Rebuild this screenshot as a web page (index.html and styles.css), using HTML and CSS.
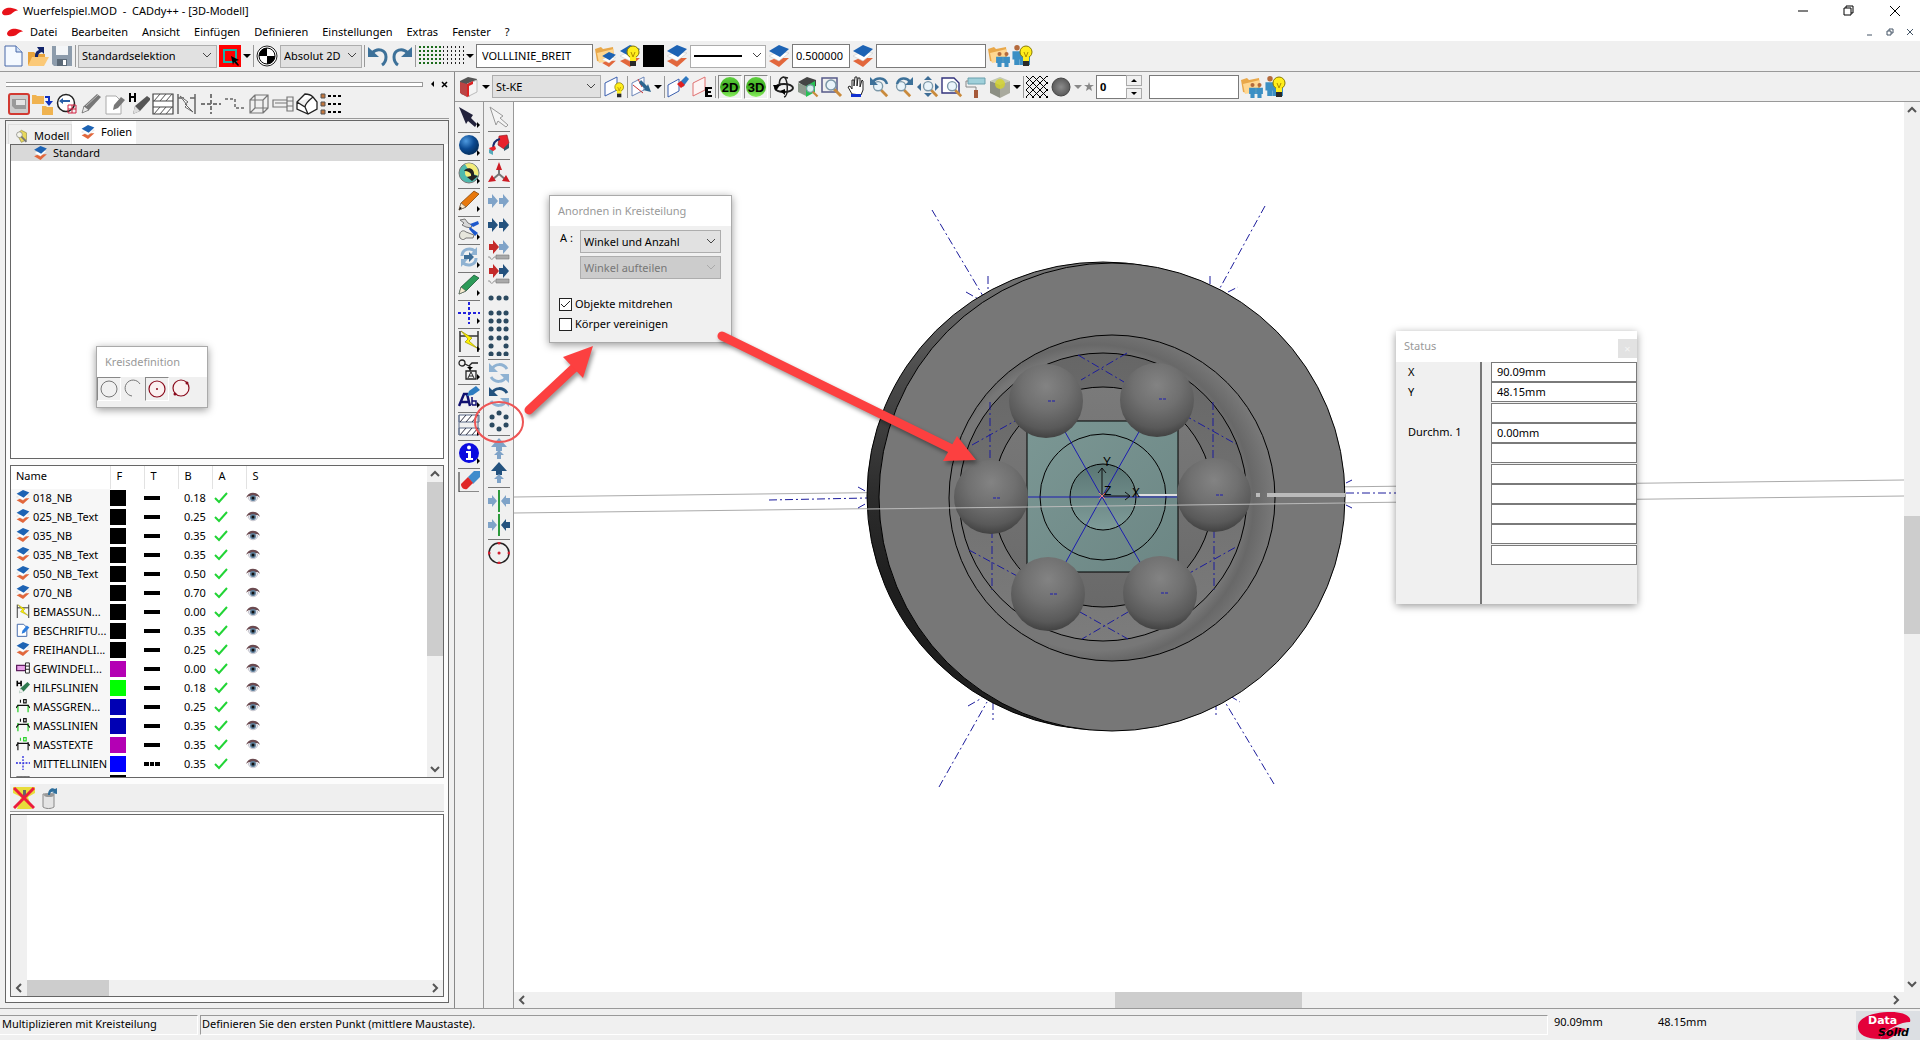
FILE: index.html
```html
<!DOCTYPE html>
<html lang="de">
<head>
<meta charset="utf-8">
<title>Wuerfelspiel.MOD - CADdy++ - [3D-Modell]</title>
<link rel="stylesheet" href="styles.css">
</head>
<body>
<svg class="defs" aria-hidden="true">
<defs>
<linearGradient id="gBody" x1="0" y1="0" x2="0" y2="1"><stop offset="0" stop-color="#777"/><stop offset=".25" stop-color="#4a4a4a"/><stop offset=".5" stop-color="#2c2c2c"/><stop offset=".7" stop-color="#1e1e1e"/></linearGradient>
<radialGradient id="gRing" gradientUnits="userSpaceOnUse" cx="1095" cy="503" r="182"><stop offset="0" stop-color="#777"/><stop offset=".81" stop-color="#777"/><stop offset=".87" stop-color="#686868"/><stop offset="1" stop-color="#7b7b7b"/></radialGradient>
<linearGradient id="gFloor" x1="0" y1="0" x2="0" y2="1"><stop offset="0" stop-color="#666"/><stop offset="1" stop-color="#7c7c7c"/></linearGradient>
<linearGradient id="gCup" x1="0" y1="0" x2="0" y2="1"><stop offset="0" stop-color="#7a7a7a"/><stop offset="1" stop-color="#696969"/></linearGradient>
<linearGradient id="gCube" x1="0" y1="0" x2="1" y2="1"><stop offset="0" stop-color="#7b9794"/><stop offset="1" stop-color="#6c8684"/></linearGradient>
<linearGradient id="gDimple" x1="0" y1="0" x2="0" y2="1"><stop offset="0" stop-color="#5a7674"/><stop offset="1" stop-color="#7f9c99"/></linearGradient>
<radialGradient id="gBall" cx=".5" cy=".3" r=".72"><stop offset="0" stop-color="#838383"/><stop offset=".45" stop-color="#707070"/><stop offset=".8" stop-color="#595959"/><stop offset="1" stop-color="#3e3e3e"/></radialGradient>
<radialGradient id="gBlue" cx=".35" cy=".3" r=".8"><stop offset="0" stop-color="#4f9be0"/><stop offset=".5" stop-color="#0b4a92"/><stop offset="1" stop-color="#04284f"/></radialGradient>
<radialGradient id="gGrey" cx=".5" cy=".5" r=".5"><stop offset="0" stop-color="#8c8c8c"/><stop offset="1" stop-color="#5a5a5a"/></radialGradient>
<linearGradient id="gGreen" x1="0" y1="0" x2="0" y2="1"><stop offset="0" stop-color="#5fd040"/><stop offset=".5" stop-color="#3fae20"/><stop offset="1" stop-color="#8bf060"/></linearGradient>
<pattern id="pHatch" width="7" height="7" patternUnits="userSpaceOnUse"><path d="M0 7L7 0M0 0L7 7" stroke="#000" stroke-width="1"/></pattern>
<pattern id="pDotG" width="4" height="4" patternUnits="userSpaceOnUse"><rect width="2" height="2" x="1" y="1" fill="#1b6b1b"/></pattern>
<pattern id="pDotK" width="4" height="4" patternUnits="userSpaceOnUse"><rect width="1" height="2" x="1" y="1" fill="#222"/></pattern>

<symbol id="swoosh" viewBox="0 0 18 10"><path d="M0 6C1 2 6 0 11 1c3 1 6 1 7 3-3 0-5 2-8 4-4 2-10 2-10-2z" fill="#e8121a"/></symbol>
<symbol id="new" viewBox="0 0 22 22"><path d="M2 1h11l6 6v14H2z" fill="#f4f9ff" stroke="#4868a8"/><path d="M13 1v6h6" fill="#cfe0f6" stroke="#4868a8"/></symbol>
<symbol id="open" viewBox="0 0 22 22"><path d="M1 20V7h6l2 2h9v4" fill="#e8a33c"/><path d="M1 21l4-9h17l-5 9z" fill="#fbc978"/><path d="M8 12c0-4 1-6 4-7l-2-3h7v7l-2-2c-3 1-4 2-4 5z" fill="#12246b"/></symbol>
<symbol id="save" viewBox="0 0 22 22"><path d="M1 1h20v20H3l-2-2z" fill="#8d9cac"/><path d="M5 1h12v9H5z" fill="#f4f6f8"/><path d="M6 14h10v7H6z" fill="#5c6a78"/><path d="M12 15h3v5h-3z" fill="#fff"/></symbol>
<symbol id="selred" viewBox="0 0 22 22"><path d="M0 0h22v22H0z" fill="#f00"/><path d="M5 5h12v12H5z" fill="none" stroke="#19b5a8" stroke-width="2"/><path d="M12 11l8 4-3 1 3 4-1 1-4-4-1 3z" fill="#000"/></symbol>
<symbol id="bw" viewBox="0 0 22 22"><circle cx="11" cy="11" r="10" fill="#fff" stroke="#222"/><circle cx="11" cy="11" r="8" fill="#fff" stroke="#000"/><path d="M11 11V3a8 8 0 0 0-8 8zM11 11v8a8 8 0 0 0 8-8z"/></symbol>
<symbol id="undo" viewBox="0 0 22 22"><path d="M5 8c6-6 14-3 14 4 0 3-1 6-4 8" fill="none" stroke="#3d7199" stroke-width="3"/><path d="M1 2v10h11z" fill="#3d7199"/></symbol>
<symbol id="redo" viewBox="0 0 22 22"><path d="M17 8C11 2 3 5 3 12c0 3 1 6 4 8" fill="none" stroke="#3d7199" stroke-width="3"/><path d="M21 2v10H10z" fill="#3d7199"/></symbol>
<symbol id="dotgrid" viewBox="0 0 46 22"><path d="M0 1h24v20H0z" fill="url(#pDotG)"/><path d="M24 1h22v20H24z" fill="url(#pDotK)"/></symbol>
<symbol id="layers" viewBox="0 0 22 22"><path d="M1 16l7-3 13 0-10 9z" fill="#e2673c"/><path d="M1 11l8-4 12 1-10 8z" fill="#fff" stroke="#ccc" stroke-width=".6"/><path d="M1 6l10-6 10 4-9 8z" fill="#1d63b4"/></symbol>
<symbol id="bulb" viewBox="0 0 22 22"><circle cx="14" cy="7" r="6" fill="#ffee1c" stroke="#8a7a00"/><path d="M11 12h6v4h-6z" fill="#ffee1c"/><path d="M12 7l2 5 2-5" fill="none" stroke="#b08c00"/><path d="M11 16h6v5h-6z" fill="#2a2a2a"/></symbol>
<symbol id="folder" viewBox="0 0 22 22"><path d="M0 4l6-2 2 2 10-2 1 11-13 4-4-1z" fill="#e9a84a"/><path d="M2 8l17-4-3 12-12 2z" fill="#ffd792"/></symbol>
<symbol id="folderlayers" viewBox="0 0 22 22"><use href="#folder"/><svg x="6" y="7" width="16" height="15"><use href="#layers"/></svg></symbol>
<symbol id="layersbulb" viewBox="0 0 22 22"><use href="#layers"/><use href="#bulb"/></symbol>
<symbol id="man" viewBox="0 0 10 22"><circle cx="5" cy="3" r="3" fill="#b46a3c"/><path d="M0 7h10v9H8v6H2v-6H0z" fill="#3b8fc4"/></symbol>
<symbol id="foldermen" viewBox="0 0 22 22"><use href="#folder"/><svg x="8" y="7" width="7" height="15"><use href="#man"/></svg><svg x="15" y="7" width="7" height="15"><use href="#man"/></svg></symbol>
<symbol id="menbulb" viewBox="0 0 22 22"><svg x="0" y="0" width="10" height="20"><use href="#man"/></svg><path d="M8 8l10 0v12H8z" fill="#3b8fc4"/><use href="#bulb"/></symbol>
<symbol id="book" viewBox="0 0 22 22"><path d="M2 5l8-4 9 2v3l-8 15-8-3z" fill="#555"/><path d="M9 8l10-4v12L9 21z" fill="#f4f4f4" stroke="#bbb"/><path d="M2 6l7 2v13l-7-4z" fill="#b44"/><path d="M9 8l6-3v3l-4 2v10l-2 1z" fill="#d22"/></symbol>
<symbol id="plane" viewBox="0 0 22 22"><path d="M2 7l12-6v13L2 20z" fill="#fdfdff" stroke="#3a5fae"/></symbol>
<symbol id="planebulb" viewBox="0 0 22 22"><use href="#plane"/><svg x="6" y="6" width="16" height="16"><use href="#bulb"/></svg></symbol>
<symbol id="planearr" viewBox="0 0 22 22"><path d="M2 7l12-6v13L2 20z" fill="#fdfdff" stroke="#6c86b8"/><path d="M8 3l4 8M3 9l10 8" stroke="#c33"/><path d="M11 4l6 6 1-2 3 8-8-2 2-1-6-6z" fill="#2c6690"/></symbol>
<symbol id="planeerase" viewBox="0 0 22 22"><path d="M1 9l11-6v12L1 21z" fill="#fdfdff" stroke="#3a5fae"/><path d="M12 7l7-7 3 3-6 8z" fill="#2f78c0"/><path d="M14 5l4 4-4 3-4-4z" fill="#e02020"/></symbol>
<symbol id="planeE" viewBox="0 0 22 22"><path d="M2 7l12-6v13L2 20z" fill="#fdf4f4" stroke="#e07070"/><path d="M14 11h7v2h-4v2h3v2h-3v2h4v2h-7z"/></symbol>
<symbol id="ball2d" viewBox="0 0 22 22"><circle cx="11" cy="11" r="10" fill="url(#gGreen)"/><text x="11" y="16" text-anchor="middle" class="ball-text">2D</text></symbol>
<symbol id="ball3d" viewBox="0 0 22 22"><circle cx="11" cy="11" r="10" fill="url(#gGreen)"/><text x="11" y="16" text-anchor="middle" class="ball-text">3D</text></symbol>
<symbol id="orbit" viewBox="0 0 22 22"><ellipse cx="11" cy="12" rx="9" ry="4" fill="none" stroke="#222" stroke-width="2"/><path d="M10 1c5 0 6 19 1 20M10 1l5 1M10 1c-4 2-4 6-3 9" fill="none" stroke="#222" stroke-width="1.5"/><path d="M0 9h7l-4 6zM7 15l5-2v6z"/></symbol>
<symbol id="glass" viewBox="0 0 22 22"><path d="M13 13l7 7" stroke="#c98a3c" stroke-width="3"/><circle cx="10" cy="9" r="5" fill="#e8f4fb" fill-opacity=".9" stroke="#7b97a8" stroke-width="1.5"/></symbol>
<symbol id="house" viewBox="0 0 22 22"><path d="M1 6l9-5 9 3v6l-9 2z" fill="#444"/><path d="M1 7l8 3v10l-8-4z" fill="#8d9a8d"/><path d="M9 10l9-5v11l-9 5z" fill="#27c154"/><svg x="6" y="6" width="16" height="16"><use href="#glass"/></svg></symbol>
<symbol id="zoomwin" viewBox="0 0 22 22"><path d="M1 2h15v14H1z" fill="none" stroke="#555a88" stroke-width="1.5"/><use href="#glass"/></symbol>
<symbol id="hand" viewBox="0 0 22 22"><path d="M7 18L3 11l2-1 2 3V4h2v6l1-9h2v9l1-8h2v9l2-7 1 1v9l-2 5z" fill="#fff" stroke="#222"/><path d="M6 18h10v3H6z" fill="#1030d0"/></symbol>
<symbol id="zoomback" viewBox="0 0 22 22"><svg x="0" y="2" width="20" height="20"><use href="#glass"/></svg><path d="M4 6c3-5 12-5 14 2" fill="none" stroke="#3d7199" stroke-width="2.5"/><path d="M1 1v8h8z" fill="#3d7199"/></symbol>
<symbol id="zoomfwd" viewBox="0 0 22 22"><svg x="-1" y="2" width="20" height="20"><use href="#glass"/></svg><path d="M4 8C6 1 14 1 17 6" fill="none" stroke="#3d7199" stroke-width="2.5"/><path d="M20 1v8h-8z" fill="#3d7199"/></symbol>
<symbol id="zoomall" viewBox="0 0 22 22"><path d="M11 0l4 4H7zM11 21l4-4H7zM0 11l4-4v8zM22 11l-4-4v8z" fill="#3d6d96"/><svg x="2" y="2" width="20" height="20"><use href="#glass"/></svg></symbol>
<symbol id="zoompage" viewBox="0 0 22 22"><path d="M1 2h12l5 5v10H1z" fill="#fff" stroke="#33337c" stroke-width="1.4"/><svg x="2" y="2" width="20" height="20"><use href="#glass"/></svg></symbol>
<symbol id="roller" viewBox="0 0 22 22"><path d="M3 2h17v6H3z" fill="#9fd0da" stroke="#6b9fac"/><path d="M3 5H1v6h10v4" fill="none" stroke="#888"/><path d="M9 14h4v8H9z" fill="#a65a3a"/></symbol>
<symbol id="cubey" viewBox="0 0 22 22"><path d="M1 5l10 3v14L1 17z" fill="#8c8f84"/><path d="M21 5l-10 3v14l10-5z" fill="#a9aa9e"/><path d="M1 5l10-4 10 4-10 4z" fill="#c4c8b4"/><circle cx="11" cy="8" r="5" fill="#d6d429" fill-opacity=".8"/></symbol>
<symbol id="xhatch" viewBox="0 0 22 22"><path d="M0 0h22v22H0z" fill="url(#pHatch)"/></symbol>
<symbol id="greyball" viewBox="0 0 22 22"><circle cx="11" cy="11" r="9" fill="url(#gGrey)" stroke="#444"/></symbol>
<symbol id="star" viewBox="0 0 10 22"><path d="M5 6l1 3h4L7 11l1 4-3-2-3 2 1-4-3-2h4z" fill="#888"/></symbol>

<symbol id="redsave" viewBox="0 0 22 22"><rect x="1" y="1" width="20" height="20" rx="2" fill="#ccc" stroke="#d23a32" stroke-width="2"/><path d="M4 6h14v10H7l-3-3z" fill="#999"/><path d="M8 7h9v5H8z" fill="#e4e4e4"/></symbol>
<symbol id="folders" viewBox="0 0 22 22"><path d="M0 2h4l1 1h7v8H0z" fill="#f0b350"/><path d="M10 13h4l1 1h6v8H10z" fill="#f0b350"/><path d="M13 4h4v6" fill="none" stroke="#1030c0" stroke-width="2"/><path d="M13 8h8l-4 5z" fill="#1030c0"/></symbol>
<symbol id="circsel" viewBox="0 0 22 22"><circle cx="10" cy="10" r="8.500" fill="#fff" stroke="#222" stroke-width="1.500"/><path d="M3 8l4-3v2h7v2H7v2z" fill="#2a5fa8"/><path d="M12 12h8v8h-8zM16 12v8M12 16h8" fill="none" stroke="#d02040"/></symbol>
<symbol id="pencilg" viewBox="0 0 22 22"><path d="M2 20l2-7L17 1l4 3L9 17z" fill="#777"/><path d="M2 20l2-7 5 4z" fill="#e8e8e8" stroke="#555" stroke-width=".6"/><path d="M6 13L18 2" stroke="#bbb"/></symbol>
<symbol id="pageedit" viewBox="0 0 22 22"><path d="M2 3h10l5 5v13H2z" fill="#fff" stroke="#aaa"/><path d="M9 17l1-5 7-8 4 3-7 8z" fill="#777"/></symbol>
<symbol id="hpencil" viewBox="0 0 22 22"><path d="M5 21l2-8L19 3l4 3-11 12z" fill="#555"/><path d="M5 21l2-8 5 5z" fill="#ddd"/><path d="M2 0v9M7 0v9M2 4h5" stroke="#000" stroke-width="2"/></symbol>
<symbol id="hatchbox" viewBox="0 0 22 22"><path d="M1 1h20v20H1zM1 8h20M1 14h20" fill="#fff" stroke="#444" stroke-width="1.200"/><path d="M2 8l6-7M8 8l6-7M14 8l6-7M2 21l6-7M8 21l6-7M14 21l6-7" stroke="#555"/></symbol>
<symbol id="dimg" viewBox="0 0 22 22"><path d="M2 1v20M19 1v20M2 5h6M14 5h5" stroke="#666" stroke-width="1.500"/><path d="M4 3l8 6-3 2 8 8-8-5 2-2z" fill="#fff" stroke="#666"/></symbol>
<symbol id="crossg" viewBox="0 0 22 22"><path d="M11 1v20M1 11h20" stroke="#777" stroke-width="2" stroke-dasharray="4 2"/></symbol>
<symbol id="stepg" viewBox="0 0 22 22"><path d="M1 6h10v9h11" fill="none" stroke="#888" stroke-width="2" stroke-dasharray="3 2"/></symbol>
<symbol id="wirecube" viewBox="0 0 22 22"><path d="M2 7h13v13H2zM7 2h13v13H7zM2 7l5-5M15 7l5-5M15 20l5-5M2 20l5-5" fill="none" stroke="#777" stroke-width="1.200"/></symbol>
<symbol id="boltg" viewBox="0 0 22 22"><path d="M1 7h14v7H1zM15 4h6v14h-6zM15 8h6M15 13h6M3 10h12" fill="none" stroke="#777" stroke-width="1.200"/></symbol>
<symbol id="roundcube" viewBox="0 0 22 22"><path d="M1 9l8-8c5 0 7 2 8 3l4 5v7l-9 5L1 16zM1 9l8 5c0-3 3-6 8-10M9 14l3 7" fill="#fff" stroke="#222" stroke-width="1.300"/></symbol>
<symbol id="listdots" viewBox="0 0 22 22"><path d="M1 1h4v4H1zM1 9h4v4H1zM1 17h4v4H1z" fill="#c4763c" stroke="#555"/><path d="M8 3h14M8 11h14M8 19h14" stroke="#000" stroke-width="2" stroke-dasharray="3 2"/></symbol>
<symbol id="modell" viewBox="0 0 22 22"><path d="M3 8l7-6 8 4v11l-8 4z" fill="#e8d85a" stroke="#8a8440"/><circle cx="7" cy="9" r="4.500" fill="#f4f4ea" stroke="#777"/><path d="M10 12l8 8" stroke="#777" stroke-width="3"/></symbol>

<symbol id="arrowd" viewBox="0 0 22 22"><path d="M1 1l14 8-2 3 6 6-2 3-7-6-2 3z" fill="#23233c"/></symbol>
<symbol id="arroww" viewBox="0 0 22 22"><path d="M2 1l13 9-3 2 8 7-2 2-8-6-2 4z" fill="#f4f4f4" stroke="#999"/></symbol>
<symbol id="sphere" viewBox="0 0 22 22"><circle cx="11" cy="11" r="10" fill="url(#gBlue)"/></symbol>
<symbol id="swirl" viewBox="0 0 22 22"><circle cx="11" cy="11" r="10" fill="#4fb9ad" stroke="#777"/><path d="M7 2c9-3 15 5 13 12-3-2-8-2-13-12z" fill="#f3ec7a"/><circle cx="11" cy="11" r="4" fill="#f3ec7a"/><path d="M6 9c3-5 11-3 10 4l4 1-6 5-5-4 4-1c1-3-3-5-7-5z" fill="#222"/></symbol>
<symbol id="pencilo" viewBox="0 0 22 22"><path d="M1 20l2-7L16 1l5 3L8 17z" fill="#e8780c" stroke="#7a3c00" stroke-width=".7"/><path d="M1 20l2-7 5 4z" fill="#fbe6c8" stroke="#555" stroke-width=".6"/><path d="M1 20l1-3 2 1z"/></symbol>
<symbol id="pliers" viewBox="0 0 22 22"><path d="M2 2l5-1 3 4 4 2-1 3-5-1-4-2 2-2z" fill="#d7d7d7" stroke="#777"/><path d="M12 6l8-3 1 3-6 3zM12 9l8 6-3 3-6-7z" fill="#1d58cc"/><path d="M2 20c-2-6 3-9 6-6l8 3-1 3-7 0-3 2z" fill="#e6e6dc" stroke="#777"/></symbol>
<symbol id="turn" viewBox="0 0 22 22"><path d="M4 10C4 3 12 1 17 5M18 12c0 7-8 9-13 5" fill="none" stroke="#8fb2d2" stroke-width="3"/><path d="M19 1v8h-7zM3 21v-8h7z" fill="#8fb2d2"/><path d="M6 9h5V6l5 5-5 5v-3H6z" fill="#3d6d96"/></symbol>
<symbol id="pencilgr" viewBox="0 0 22 22"><path d="M1 20l2-7L16 1l5 3L8 17z" fill="#2c9a58" stroke="#0f4a28" stroke-width=".7"/><path d="M1 20l2-7 5 4z" fill="#f6ecd0" stroke="#555" stroke-width=".6"/></symbol>
<symbol id="crossb" viewBox="0 0 22 22"><path d="M11 0v22M0 11h22" stroke="#2222dd" stroke-width="2" stroke-dasharray="3 2"/></symbol>
<symbol id="dimy" viewBox="0 0 22 22"><path d="M2 1v21M20 1v21M2 6h18" stroke="#333" stroke-width="1.500"/><path d="M3 1l11 7-3 3 8 7-12-6 3-3z" fill="#fff200" stroke="#9a9000" stroke-width=".7"/></symbol>
<symbol id="weld" viewBox="0 0 22 22"><circle cx="4" cy="5" r="3" fill="none" stroke="#222" stroke-width="1.300"/><path d="M7 6l4 2 3-3h6M12 8v5M8 13h10v8H8z" fill="none" stroke="#222" stroke-width="1.300"/><path d="M9 9h6l-3 3z"/><path d="M10 20l3-6 3 6M11 18h4" fill="none" stroke="#222"/></symbol>
<symbol id="abc" viewBox="0 0 22 22"><path d="M1 20L6 8h3l3 12M3 16h7" fill="none" stroke="#101070" stroke-width="2.500"/><path d="M14 11v8M14 15h4v4h-4" fill="none" stroke="#101070" stroke-width="1.500"/><path d="M9 10l2-5 7-5 4 4-7 5z" fill="#2d7cc0"/></symbol>
<symbol id="hatchb" viewBox="0 0 22 22"><path d="M1 1v20M20 1v20M1 1h20v7H1zM1 14h20v7H1z" fill="#fff" stroke="#5b6b88"/><path d="M2 8l6-7M8 8l6-7M14 8l6-7M2 21l6-7M8 21l6-7M14 21l6-7" stroke="#334"/></symbol>
<symbol id="info" viewBox="0 0 22 22"><circle cx="11" cy="11" r="10" fill="#0a0ae0"/><circle cx="11" cy="5.500" r="2" fill="#fff"/><path d="M8 9h5v7h2v2H8v-2h2v-5H8z" fill="#fff"/></symbol>
<symbol id="eraser" viewBox="0 0 22 22"><path d="M1 2v20h20" fill="none" stroke="#222"/><path d="M10 7l6-6h6v6l-7 7z" fill="#3f8ccc"/><path d="M3 14l7-7 5 6-6 6c-4 1-6-2-6-5z" fill="#e02828"/></symbol>
<symbol id="move3d" viewBox="0 0 22 22"><path d="M11 2l8-1 2 8-5 6-6-4z" fill="#e8222c" stroke="#8a1018" stroke-width=".6"/><path d="M21 9v5l-5 3v-3z" fill="#356"/><path d="M5 15c0-6 2-9 7-10" fill="none" stroke="#1b2a6b" stroke-width="2"/><path d="M1 14l6-2 1 3-4 3z" fill="#e8222c"/><path d="M1 15l4 2v4l-4-2z" fill="#5ab"/></symbol>
<symbol id="axes" viewBox="0 0 22 22"><path d="M11 12V4M11 12l-7 6M11 12l7 6" stroke="#777" stroke-width="2"/><path d="M11 0l3 8H8zM0 20l4-7 4 6zM22 20l-4-7-4 6z" fill="#cc1c24"/></symbol>
<symbol id="ar" viewBox="0 0 10 14"><path d="M0 4h4V0l6 7-6 7v-4H0z" fill="currentColor"/></symbol>
<symbol id="arr2l" viewBox="0 0 22 22"><g color="#7fa3c8"><use href="#ar" x="0" y="4" width="10" height="14"/><use href="#ar" x="11" y="4" width="10" height="14"/></g></symbol>
<symbol id="arr2d" viewBox="0 0 22 22"><g color="#24527e"><use href="#ar" x="0" y="4" width="10" height="14"/><use href="#ar" x="11" y="4" width="10" height="14"/></g></symbol>
<symbol id="spring" viewBox="0 0 22 6"><path d="M0 3h2c0 3 3 3 4 0h2" fill="none" stroke="#999"/><path d="M8 1h13v4H8z" fill="#aaa" stroke="#777" stroke-width=".6"/></symbol>
<symbol id="arr3l" viewBox="0 0 22 22"><use href="#ar" x="1" y="2" width="10" height="14" color="#c42a2a"/><use href="#ar" x="11" y="2" width="10" height="14" color="#7fa3c8"/><use href="#spring" x="0" y="16" width="22" height="6"/></symbol>
<symbol id="arr3d" viewBox="0 0 22 22"><use href="#ar" x="1" y="2" width="10" height="14" color="#c42a2a"/><use href="#ar" x="11" y="2" width="10" height="14" color="#24527e"/><use href="#spring" x="0" y="16" width="22" height="6"/></symbol>
<symbol id="dots1" viewBox="0 0 22 22"><path d="M3 12h.1M11 12h.1M18 12h.1" class="dot"/></symbol>
<symbol id="dots9" viewBox="0 0 22 22"><path d="M3 3h.1M11 3h.1M18 3h.1M3 11h.1M11 11h.1M18 11h.1M3 19h.1M11 19h.1M18 19h.1" class="dot"/></symbol>
<symbol id="dots8" viewBox="0 0 22 22"><path d="M3 4h.1M11 4h.1M18 4h.1M3 12h.1M18 12h.1M3 20h.1M11 20h.1M18 20h.1" class="dot"/></symbol>
<symbol id="rotl" viewBox="0 0 22 22"><path d="M3 8c4-7 12-7 16-1M19 14c-4 7-12 7-16 1" fill="none" stroke="#8fb2d2" stroke-width="3"/><path d="M1 1v9h9zM21 21v-9h-9z" fill="#8fb2d2"/></symbol>
<symbol id="rotd" viewBox="0 0 22 22"><path d="M3 8c4-7 12-7 16-1" fill="none" stroke="#24527e" stroke-width="3"/><path d="M19 14c-4 7-12 7-16 1" fill="none" stroke="#8fb2d2" stroke-width="3"/><path d="M1 1v9h9z" fill="#24527e"/><path d="M21 21v-9h-9z" fill="#8fb2d2"/></symbol>
<symbol id="dots6" viewBox="0 0 22 22"><path d="M11 3h.1M4 7h.1M18 7h.1M4 15h.1M18 15h.1M11 19h.1" class="dot"/></symbol>
<symbol id="upl" viewBox="0 0 22 22"><path d="M11 0l8 9h-5v4H8V9H3z" fill="#7fa3c8"/><path d="M11 12l5 5h-3v4H9v-4H6z" fill="#7fa3c8"/></symbol>
<symbol id="upd" viewBox="0 0 22 22"><path d="M11 0l8 9h-5v4H8V9H3z" fill="#24527e"/><path d="M11 12l5 5h-3v4H9v-4H6z" fill="#7fa3c8"/></symbol>
<symbol id="mirl" viewBox="0 0 22 22"><path d="M11 0v22" stroke="#2c9a3c" stroke-width="2"/><path d="M0 8h4V5l5 6-5 6v-3H0zM22 8h-4V5l-5 6 5 6v-3h4z" fill="#7fa3c8"/></symbol>
<symbol id="mird" viewBox="0 0 22 22"><path d="M11 0v22" stroke="#2c9a3c" stroke-width="2"/><path d="M0 8h4V5l5 6-5 6v-3H0z" fill="#7fa3c8"/><path d="M22 8h-4V5l-5 6 5 6v-3h4z" fill="#24527e"/></symbol>
<symbol id="circ4" viewBox="0 0 22 22"><circle cx="11" cy="11" r="10" fill="none" stroke="#222" stroke-width="1.500"/><path d="M11 1h.1M11 21h.1M1 11h.1M21 11h.1M11 11h.1" stroke="#d02030" stroke-width="3" stroke-linecap="round"/></symbol>

<symbol id="check" viewBox="0 0 14 14"><path d="M1 7l4 4L13 2" fill="none" stroke="#22d436" stroke-width="2"/></symbol>
<symbol id="eye" viewBox="0 0 14 12"><path d="M0 6c2-7 12-7 14 0-1-1-2-2-3-2H4C2 4 1 5 0 6z" fill="#6b4a50"/><path d="M2 6c2-3 8-3 10 0-2 5-8 5-10 0z" fill="#e4e6ee" stroke="#9a98a4" stroke-width=".5"/><circle cx="7" cy="6" r="3" fill="#5b7c98"/><circle cx="7" cy="6" r="1.500" fill="#111"/></symbol>
<symbol id="gew" viewBox="0 0 22 22"><path d="M1 7h14v8H1z" fill="#e8a0e8" stroke="#602060" stroke-width="2"/><path d="M15 3h6v16h-6zM15 8h6M15 13h6" fill="#fff" stroke="#222" stroke-width="1.500"/></symbol>
<symbol id="hgreen" viewBox="0 0 22 22"><path d="M5 21l2-8L18 3l4 4-10 11z" fill="#2f7a50"/><path d="M5 21l2-8 5 5z" fill="#eee"/><path d="M2 1v9M8 1v9M2 5h6" stroke="#000" stroke-width="2.500"/></symbol>
<symbol id="massg" viewBox="0 0 22 22"><path d="M3 9v12M19 9v12" stroke="#2bd02b" stroke-width="2"/><path d="M0 14l3-4h16l3 4M7 1v5M12 1h4v5h-4z" fill="none" stroke="#111" stroke-width="1.800"/></symbol>
<symbol id="massl" viewBox="0 0 22 22"><path d="M3 8v13M19 8v13" stroke="#2bd02b" stroke-width="2"/><path d="M0 15l4-5h14l4 5M7 1v5M12 1h4v5h-4z" fill="none" stroke="#111" stroke-width="1.800"/></symbol>
<symbol id="masst" viewBox="0 0 22 22"><path d="M3 8v13M19 8v13M0 14l3-4h16l3 4" fill="none" stroke="#111" stroke-width="1.800"/><path d="M7 1v5M12 1h4v5h-4z" fill="none" stroke="#2bd02b" stroke-width="1.800"/></symbol>
<symbol id="pageblue" viewBox="0 0 22 22"><path d="M2 2h10l5 5v14H2z" fill="#fff" stroke="#3f66a8" stroke-width="1.500"/><path d="M9 17l1-5 7-8 4 3-7 8z" fill="#2d7cdc"/></symbol>
<symbol id="brushx" viewBox="0 0 22 22"><path d="M0 0h22v6l-7 4 4 12H4l4-12-8-4z" fill="#e8dc3a"/><path d="M10 3h3v9h-3z" fill="#666"/><path d="M1 1l20 20M21 1L1 21" stroke="#ec1c3c" stroke-width="3"/></symbol>
<symbol id="bin" viewBox="0 0 22 22"><path d="M2 7h11v13c-3 2-8 2-11 0z" fill="#e4e4e4" stroke="#888"/><ellipse cx="8" cy="8" rx="5" ry="2" fill="#999"/><path d="M7 8c0-6 4-8 7-6l2-1v6l-5-1 2-1c-3-1-4 1-4 3z" fill="#2f6f9c"/></symbol>
<symbol id="circle" viewBox="0 0 22 22"><circle cx="11" cy="11" r="8" fill="none" stroke="#777"/></symbol>
<symbol id="arc" viewBox="0 0 22 22"><path d="M10 18a8 8 0 1 1 8-12" fill="none" stroke="#777"/></symbol>
<symbol id="circlec" viewBox="0 0 22 22"><circle cx="11" cy="11" r="8" fill="#fbf0f0" stroke="#8a0a1c" stroke-width="1.200"/><circle cx="11" cy="11" r="1" fill="#8a0a1c"/></symbol>
<symbol id="circle2" viewBox="0 0 22 22"><circle cx="11" cy="10" r="8" fill="#fbf0f0" stroke="#8a0a1c" stroke-width="1.200"/><circle cx="5" cy="16" r="1.500" fill="#8a0a1c"/><circle cx="17" cy="5" r="1.500" fill="#8a0a1c"/></symbol>
<symbol id="down" viewBox="0 0 8 22"><path d="M0 9h8l-4 4z" fill="currentColor"/></symbol>
<symbol id="chev" viewBox="0 0 16 16"><path d="M4 10l4-4 4 4" fill="none" stroke="#555" stroke-width="2"/></symbol>
<symbol id="tri" viewBox="0 0 14 9"><path d="M4 6h6L7 3z"/></symbol>
<symbol id="dock" viewBox="0 0 8 10"><path d="M5 2v6L2 5z"/></symbol>
<symbol id="closex" viewBox="0 0 8 10"><path d="M1 3l5 5M6 3L1 8" stroke="#000" stroke-width="1.500"/></symbol>
</defs>
</svg>

<header class="titlebar">
  <svg class="logo"><use href="#swoosh"/></svg>
  <h1>Wuerfelspiel.MOD&nbsp; -&nbsp; CADdy++ - [3D-Modell]</h1>
  <div class="wincontrols">
    <button aria-label="Minimieren"><svg viewBox="0 0 12 12"><path d="M1 6h10"/></svg></button>
    <button aria-label="Verkleinern"><svg viewBox="0 0 12 12"><path d="M1 3h7v7H1zM3 3V1h7v7H8"/></svg></button>
    <button aria-label="Schließen"><svg viewBox="0 0 12 12"><path d="M1 1l10 10M11 1L1 11"/></svg></button>
  </div>
</header>

<nav class="menubar">
  <svg class="logo"><use href="#swoosh"/></svg>
  <button>Datei</button><button>Bearbeiten</button><button>Ansicht</button><button>Einfügen</button><button>Definieren</button><button>Einstellungen</button><button>Extras</button><button>Fenster</button><button>?</button>
  <div class="mdicontrols">
    <button aria-label="Fenster minimieren"><svg viewBox="0 0 8 8"><path d="M1 7h5"/></svg></button>
    <button aria-label="Fenster verkleinern"><svg viewBox="0 0 8 8"><path d="M1 3h4v4H1zM3 3V1h4v4H5"/></svg></button>
    <button aria-label="Fenster schließen"><svg viewBox="0 0 8 8"><path d="M1 1l6 6M7 1L1 7"/></svg></button>
  </div>
</nav>

<div class="toolbar main-toolbar">
  <button class="tb" aria-label="Neu"><svg><use href="#new"/></svg></button>
  <button class="tb" aria-label="Öffnen"><svg><use href="#open"/></svg></button>
  <button class="tb" aria-label="Speichern"><svg><use href="#save"/></svg></button>
  <i class="sep"></i>
  <select class="w-selection" aria-label="Selektion"><option>Standardselektion</option></select>
  <button class="tb" aria-label="Selektionsmodus"><svg><use href="#selred"/></svg></button>
  <button class="dd" aria-label="Selektionsoptionen"><svg><use href="#down"/></svg></button>
  <i class="sep"></i>
  <button class="tb" aria-label="Nullpunkt"><svg><use href="#bw"/></svg></button>
  <select class="w-coord" aria-label="Koordinaten"><option>Absolut 2D</option></select>
  <i class="sep"></i>
  <button class="tb" aria-label="Rückgängig"><svg><use href="#undo"/></svg></button>
  <button class="tb" aria-label="Wiederholen"><svg><use href="#redo"/></svg></button>
  <i class="sep"></i>
  <button class="tb wide" aria-label="Raster"><svg><use href="#dotgrid"/></svg></button>
  <button class="dd" aria-label="Rasteroptionen"><svg><use href="#down"/></svg></button>
  <input class="w-linename" aria-label="Linienart" value="VOLLLINIE_BREIT">
  <button class="tb" aria-label="Folie wählen"><svg><use href="#folderlayers"/></svg></button>
  <button class="tb" aria-label="Folie sichtbar"><svg><use href="#layersbulb"/></svg></button>
  <button class="tb color" aria-label="Farbe"></button>
  <button class="tb" aria-label="Farbe aus Folie"><svg><use href="#layers"/></svg></button>
  <select class="w-line white line" aria-label="Linientyp"><option></option></select>
  <button class="tb" aria-label="Typ aus Folie"><svg><use href="#layers"/></svg></button>
  <input class="w-width" aria-label="Breite" value="0.500000">
  <button class="tb" aria-label="Breite aus Folie"><svg><use href="#layers"/></svg></button>
  <input class="w-group" aria-label="Gruppe">
  <button class="tb" aria-label="Gruppe wählen"><svg><use href="#foldermen"/></svg></button>
  <button class="tb" aria-label="Gruppe sichtbar"><svg><use href="#menbulb"/></svg></button>
</div>

<main class="workspace">
  <aside class="sidebar">
    <div class="grip"><span></span><button aria-label="Andocken"><svg><use href="#dock"/></svg></button><button aria-label="Leiste schließen"><svg><use href="#closex"/></svg></button></div>
    <div class="toolbar side-toolbar">
      <button class="tb" aria-label="Ablage"><svg><use href="#redsave"/></svg></button>
      <button class="tb" aria-label="Ordner"><svg><use href="#folders"/></svg></button>
      <button class="tb" aria-label="Kreis"><svg><use href="#circsel"/></svg></button>
      <button class="tb" aria-label="Stift"><svg><use href="#pencilg"/></svg></button>
      <button class="tb" aria-label="Beschriftung"><svg><use href="#pageedit"/></svg></button>
      <button class="tb" aria-label="Hilfslinie"><svg><use href="#hpencil"/></svg></button>
      <button class="tb" aria-label="Schraffur"><svg><use href="#hatchbox"/></svg></button>
      <button class="tb" aria-label="Bemaßung"><svg><use href="#dimg"/></svg></button>
      <button class="tb" aria-label="Mittellinie"><svg><use href="#crossg"/></svg></button>
      <button class="tb" aria-label="Schnittverlauf"><svg><use href="#stepg"/></svg></button>
      <button class="tb" aria-label="Drahtmodell"><svg><use href="#wirecube"/></svg></button>
      <button class="tb" aria-label="Gewinde"><svg><use href="#boltg"/></svg></button>
      <button class="tb" aria-label="Körper"><svg><use href="#roundcube"/></svg></button>
      <button class="tb" aria-label="Liste"><svg><use href="#listdots"/></svg></button>
    </div>
    <div class="frame">
      <div class="tabs"><button class="tab"><svg><use href="#modell"/></svg>Modell</button><button class="tab active"><svg><use href="#layers"/></svg>Folien</button></div>
      <div class="box tree"><div class="treerow"><svg><use href="#layers"/></svg>Standard</div></div>
      <div class="box layerlist">
        <div class="tablewrap">
        <table>
          <colgroup><col class="c-name"><col class="c-s"><col class="c-s"><col class="c-s"><col class="c-s"><col class="c-s"></colgroup>
          <thead><tr><th>Name</th><th>F</th><th>T</th><th>B</th><th>A</th><th>S</th></tr></thead>
          <tbody>
          <tr><td><svg><use href="#layers"/></svg>018_NB</td><td><i class="sw"></i></td><td><i class="ln"></i></td><td>0.18</td><td><svg><use href="#check"/></svg></td><td><svg><use href="#eye"/></svg></td></tr>
          <tr><td><svg><use href="#layers"/></svg>025_NB_Text</td><td><i class="sw"></i></td><td><i class="ln"></i></td><td>0.25</td><td><svg><use href="#check"/></svg></td><td><svg><use href="#eye"/></svg></td></tr>
          <tr><td><svg><use href="#layers"/></svg>035_NB</td><td><i class="sw"></i></td><td><i class="ln"></i></td><td>0.35</td><td><svg><use href="#check"/></svg></td><td><svg><use href="#eye"/></svg></td></tr>
          <tr><td><svg><use href="#layers"/></svg>035_NB_Text</td><td><i class="sw"></i></td><td><i class="ln"></i></td><td>0.35</td><td><svg><use href="#check"/></svg></td><td><svg><use href="#eye"/></svg></td></tr>
          <tr><td><svg><use href="#layers"/></svg>050_NB_Text</td><td><i class="sw"></i></td><td><i class="ln"></i></td><td>0.50</td><td><svg><use href="#check"/></svg></td><td><svg><use href="#eye"/></svg></td></tr>
          <tr><td><svg><use href="#layers"/></svg>070_NB</td><td><i class="sw"></i></td><td><i class="ln"></i></td><td>0.70</td><td><svg><use href="#check"/></svg></td><td><svg><use href="#eye"/></svg></td></tr>
          <tr><td><svg><use href="#dimy"/></svg>BEMASSUN...</td><td><i class="sw"></i></td><td><i class="ln"></i></td><td>0.00</td><td><svg><use href="#check"/></svg></td><td><svg><use href="#eye"/></svg></td></tr>
          <tr><td><svg><use href="#pageblue"/></svg>BESCHRIFTU...</td><td><i class="sw"></i></td><td><i class="ln"></i></td><td>0.35</td><td><svg><use href="#check"/></svg></td><td><svg><use href="#eye"/></svg></td></tr>
          <tr><td><svg><use href="#layers"/></svg>FREIHANDLI...</td><td><i class="sw"></i></td><td><i class="ln"></i></td><td>0.25</td><td><svg><use href="#check"/></svg></td><td><svg><use href="#eye"/></svg></td></tr>
          <tr><td><svg><use href="#gew"/></svg>GEWINDELI...</td><td><i class="sw magenta"></i></td><td><i class="ln"></i></td><td>0.00</td><td><svg><use href="#check"/></svg></td><td><svg><use href="#eye"/></svg></td></tr>
          <tr><td><svg><use href="#hgreen"/></svg>HILFSLINIEN</td><td><i class="sw green"></i></td><td><i class="ln"></i></td><td>0.18</td><td><svg><use href="#check"/></svg></td><td><svg><use href="#eye"/></svg></td></tr>
          <tr><td><svg><use href="#massg"/></svg>MASSGREN...</td><td><i class="sw navy"></i></td><td><i class="ln"></i></td><td>0.25</td><td><svg><use href="#check"/></svg></td><td><svg><use href="#eye"/></svg></td></tr>
          <tr><td><svg><use href="#massl"/></svg>MASSLINIEN</td><td><i class="sw navy"></i></td><td><i class="ln"></i></td><td>0.35</td><td><svg><use href="#check"/></svg></td><td><svg><use href="#eye"/></svg></td></tr>
          <tr><td><svg><use href="#masst"/></svg>MASSTEXTE</td><td><i class="sw magenta"></i></td><td><i class="ln"></i></td><td>0.35</td><td><svg><use href="#check"/></svg></td><td><svg><use href="#eye"/></svg></td></tr>
          <tr><td><svg><use href="#crossb"/></svg>MITTELLINIEN</td><td><i class="sw blue"></i></td><td><i class="ln dashed"></i></td><td>0.35</td><td><svg><use href="#check"/></svg></td><td><svg><use href="#eye"/></svg></td></tr>
          <tr><td><svg><use href="#hatchbox"/></svg></td><td><i class="sw"></i></td><td></td><td></td><td><svg><use href="#check"/></svg></td><td><svg><use href="#eye"/></svg></td></tr>
          </tbody>
        </table>
        </div>
        <div class="vscroll"><svg><use href="#chev"/></svg><i class="thumb list-thumb"></i><svg class="flip"><use href="#chev"/></svg></div>
      </div>
      <div class="strip"><button class="tb" aria-label="Löschen"><svg><use href="#brushx"/></svg></button><button class="tb" aria-label="Papierkorb"><svg><use href="#bin"/></svg></button></div>
      <div class="box console">
        <div class="output"></div>
        <div class="hscroll"><svg class="left"><use href="#chev"/></svg><i class="thumb console-thumb"></i><svg class="right"><use href="#chev"/></svg></div>
      </div>
    </div>
    <section class="window circle-window">
      <h2>Kreisdefinition</h2>
      <div class="circlebtns">
        <button class="sunk" aria-label="Vollkreis"><svg><use href="#circle"/></svg></button>
        <button aria-label="Kreisbogen"><svg><use href="#arc"/></svg></button>
        <button class="sunk" aria-label="Mittelpunkt"><svg><use href="#circlec"/></svg></button>
        <button aria-label="Zwei Punkte"><svg><use href="#circle2"/></svg></button>
      </div>
    </section>
  </aside>

  <section class="model">
    <div class="toolbar view-toolbar">
      <button class="tb" aria-label="Körper"><svg><use href="#book"/></svg></button>
      <button class="dd" aria-label="Körperoptionen"><svg><use href="#down"/></svg></button>
      <select class="w-plane" aria-label="Ebene"><option>St-KE</option></select>
      <button class="tb" aria-label="Ebene sichtbar"><svg><use href="#planebulb"/></svg></button>
      <i class="sep"></i>
      <button class="tb" aria-label="Ebene setzen"><svg><use href="#planearr"/></svg></button>
      <button class="dd" aria-label="Ebenenoptionen"><svg><use href="#down"/></svg></button>
      <i class="sep"></i>
      <button class="tb" aria-label="Ebene löschen"><svg><use href="#planeerase"/></svg></button>
      <button class="tb" aria-label="Ebene bearbeiten"><svg><use href="#planeE"/></svg></button>
      <i class="sep"></i>
      <button class="tb sunk" aria-label="2D"><svg><use href="#ball2d"/></svg></button>
      <button class="tb sunk" aria-label="3D"><svg><use href="#ball3d"/></svg></button>
      <i class="sep"></i>
      <button class="tb" aria-label="Drehen"><svg><use href="#orbit"/></svg></button>
      <button class="tb" aria-label="Ansicht"><svg><use href="#house"/></svg></button>
      <button class="tb" aria-label="Zoom Fenster"><svg><use href="#zoomwin"/></svg></button>
      <button class="tb" aria-label="Verschieben"><svg><use href="#hand"/></svg></button>
      <button class="tb" aria-label="Zoom zurück"><svg><use href="#zoomback"/></svg></button>
      <button class="tb" aria-label="Zoom vor"><svg><use href="#zoomfwd"/></svg></button>
      <button class="tb" aria-label="Zoom alles"><svg><use href="#zoomall"/></svg></button>
      <button class="tb" aria-label="Zoom Blatt"><svg><use href="#zoompage"/></svg></button>
      <button class="tb" aria-label="Neu zeichnen"><svg><use href="#roller"/></svg></button>
      <button class="tb" aria-label="Darstellung"><svg><use href="#cubey"/></svg></button>
      <button class="dd" aria-label="Darstellungsoptionen"><svg><use href="#down"/></svg></button>
      <i class="sep"></i>
      <button class="tb" aria-label="Netz"><svg><use href="#xhatch"/></svg></button>
      <button class="tb" aria-label="Material"><svg><use href="#greyball"/></svg></button>
      <button class="dd grey" aria-label="Materialoptionen"><svg><use href="#down"/></svg></button>
      <svg class="star"><use href="#star"/></svg>
      <div class="spin"><input aria-label="Stufe" value="0"><div><button aria-label="Mehr"><svg><use href="#tri"/></svg></button><button aria-label="Weniger"><svg class="flipped"><use href="#tri"/></svg></button></div></div>
      <input class="w-filter" aria-label="Filter">
      <button class="tb" aria-label="Gruppe wählen"><svg><use href="#foldermen"/></svg></button>
      <button class="tb" aria-label="Gruppe sichtbar"><svg><use href="#menbulb"/></svg></button>
    </div>
    <div class="modelbody">
      <div class="palette lined">
        <button class="more" aria-label="Selektion"><svg><use href="#arrowd"/></svg></button>
        <button class="more" aria-label="Grundkörper"><svg><use href="#sphere"/></svg></button>
        <button class="more" aria-label="Boolesche"><svg><use href="#swirl"/></svg></button>
        <button class="more" aria-label="Zeichnen"><svg><use href="#pencilo"/></svg></button>
        <button class="more" aria-label="Ändern"><svg><use href="#pliers"/></svg></button>
        <button class="more" aria-label="Transformieren"><svg><use href="#turn"/></svg></button>
        <button class="more" aria-label="Hilfsgeometrie"><svg><use href="#pencilgr"/></svg></button>
        <button class="more" aria-label="Mittellinien"><svg><use href="#crossb"/></svg></button>
        <button class="more" aria-label="Bemaßen"><svg><use href="#dimy"/></svg></button>
        <button class="more" aria-label="Symbole"><svg><use href="#weld"/></svg></button>
        <button class="more" aria-label="Text"><svg><use href="#abc"/></svg></button>
        <button class="more" aria-label="Schraffieren"><svg><use href="#hatchb"/></svg></button>
        <button class="more" aria-label="Information"><svg><use href="#info"/></svg></button>
        <button aria-label="Radieren"><svg><use href="#eraser"/></svg></button>
      </div>
      <div class="palette">
        <button aria-label="Auswahl"><svg><use href="#arroww"/></svg></button><hr>
        <button aria-label="Frei bewegen"><svg><use href="#move3d"/></svg></button><hr>
        <button aria-label="Achsen"><svg><use href="#axes"/></svg></button><hr>
        <button aria-label="Verschieben"><svg><use href="#arr2l"/></svg></button>
        <button aria-label="Kopieren"><svg><use href="#arr2d"/></svg></button>
        <button aria-label="Strecken"><svg><use href="#arr3l"/></svg></button>
        <button aria-label="Strecken und kopieren"><svg><use href="#arr3d"/></svg></button>
        <button aria-label="Reihe"><svg><use href="#dots1"/></svg></button>
        <button aria-label="Matrix"><svg><use href="#dots9"/></svg></button>
        <button aria-label="Rahmen"><svg><use href="#dots8"/></svg></button><hr>
        <button aria-label="Drehen"><svg><use href="#rotl"/></svg></button>
        <button aria-label="Drehen und kopieren"><svg><use href="#rotd"/></svg></button>
        <button aria-label="Kreisteilung"><svg><use href="#dots6"/></svg></button><hr>
        <button aria-label="Skalieren"><svg><use href="#upl"/></svg></button>
        <button aria-label="Skalieren und kopieren"><svg><use href="#upd"/></svg></button><hr>
        <button aria-label="Spiegeln"><svg><use href="#mirl"/></svg></button>
        <button aria-label="Spiegeln und kopieren"><svg><use href="#mird"/></svg></button><hr>
        <button aria-label="Kreispunkte"><svg><use href="#circ4"/></svg></button>
      </div>
      <div class="viewport">
        <div class="canvas">
          <svg class="drawing" viewBox="514 102 1390 890" role="img" aria-label="3D-Modell">
            <path d="M514 497L1904 480M514 513L1904 496" stroke="#aaa" fill="none"/>
            <g class="axis">
              <path d="M769 500L867 498M1346 493h60M932 210l51 86M1265 206l-45 82M939 787l48-85M1274 784l-49-82"/>
              <path d="M988 276v18M966 292l14 8M1210 276v14M1228 292l10-5M993 702v18M968 706l14-8M1216 702v16M1230 696l10 6M858 487l9 5M858 508l9-5M1346 483l6-3M1346 505l6 3"/>
            </g>
            <ellipse cx="1103" cy="496" rx="236" ry="234" fill="url(#gBody)" stroke="#000"/>
            <ellipse cx="1112" cy="497" rx="233" ry="234" fill="#777" stroke="#000"/>
            <circle cx="1112" cy="498" r="163" fill="url(#gRing)" stroke="#000"/>
            <circle cx="1103" cy="497" r="144" fill="url(#gFloor)" stroke="#000"/>
            <circle cx="1103" cy="497" r="110" fill="url(#gCup)" stroke="#000"/>
            <path d="M1027 421h151v151h-151z" fill="url(#gCube)" stroke="#000"/>
            <circle cx="1103" cy="497" r="63" fill="none" stroke="#000"/>
            <circle cx="1103" cy="497" r="33" fill="url(#gDimple)" stroke="#000"/>
            <g class="axis">
              <path d="M1078 355l46 27M1127 353l-46 27M990 402v60M1213 402v60M992 530v60M1214 530v60M972 445l50-28M1184 415l52 29M969 550l50 27M1186 575l50-28M1080 612l48 27M1128 612l-46 27"/>
            </g>
            <path d="M1102 497l-42-74M1102 497l42-74M1102 497l-40 72M1102 497l42 72M1024 497h154" stroke="#1c1cb0" fill="none"/>
            <path d="M1137 495h40" stroke="#ddd" stroke-width="2"/>
            <circle cx="1046" cy="401" r="37" fill="url(#gBall)"/>
            <circle cx="1157" cy="400" r="37" fill="url(#gBall)"/>
            <circle cx="991" cy="497" r="37" fill="url(#gBall)"/>
            <circle cx="1214" cy="495" r="37" fill="url(#gBall)"/>
            <circle cx="1048" cy="594" r="37" fill="url(#gBall)"/>
            <circle cx="1160" cy="593" r="37" fill="url(#gBall)"/>
            <path d="M1048 401h7M1159 399h8M993 498h7M1216 495h7M1050 594h7M1161 593h7" stroke="#1c1cb0" stroke-dasharray="3 1"/>
            <path d="M867 509L1345 503" stroke="#bbb"/>
            <path d="M1256 495h4M1267 495h78" stroke="#bbb" stroke-width="4"/>
            <path d="M1102 496v-28m-4 5l4-5 4 5M1102 496h28m-5-4l5 4-5 4" stroke="#111" fill="none"/>
            <path d="M1099 493l6 6M1105 493l-6 6" stroke="#e08080"/>
            <text x="1103" y="466">Y</text><text x="1132" y="497">X</text><text x="1104" y="495">Z</text>
          </svg>
          <section class="window arrange-window">
            <h2>Anordnen in Kreisteilung</h2>
            <div class="arrange-body">
              <label for="mode">A :</label>
              <select id="mode"><option>Winkel und Anzahl</option></select>
              <select class="second" aria-label="Aufteilung" disabled><option>Winkel aufteilen</option></select>
            </div>
            <div class="checks">
              <label><input type="checkbox" checked>Objekte mitdrehen</label>
              <label><input type="checkbox">Körper vereinigen</label>
            </div>
          </section>
          <section class="window status-window">
            <header><h2>Status</h2><button aria-label="Status schließen">×</button></header>
            <div class="status-body">
              <div class="names"><label for="sx">X</label><label for="sy">Y</label><span></span><label for="sd">Durchm. 1</label></div>
              <div class="values">
                <div><input id="sx" value="90.09mm"><input id="sy" value="48.15mm"></div>
                <div><input aria-label="Wert 3"><input id="sd" value="0.00mm"><input aria-label="Wert 5"></div>
                <div><input aria-label="Wert 6"><input aria-label="Wert 7"><input aria-label="Wert 8"><input aria-label="Wert 9"></div>
                <div><input aria-label="Wert 10"></div>
              </div>
            </div>
          </section>
          <svg class="notes" viewBox="0 0 540 420" aria-hidden="true">
            <ellipse cx="25" cy="103" rx="24" ry="20" fill="none" stroke="#ee5555" stroke-width="2"/>
            <g class="arrow">
              <path d="M55 91L101 48" stroke="#fc4040" stroke-width="9" stroke-linecap="round"/><path d="M119 27l-10 32-20-21z"/>
              <path d="M248 17L478 130" stroke="#fc4040" stroke-width="9" stroke-linecap="round"/><path d="M502 141l-33 1 14-25z"/>
            </g>
          </svg>
        </div>
        <div class="vscroll"><svg><use href="#chev"/></svg><i class="thumb view-thumb"></i><svg class="flip"><use href="#chev"/></svg></div>
        <div class="hscroll"><svg class="left"><use href="#chev"/></svg><i class="thumb wide-thumb"></i><svg class="right"><use href="#chev"/></svg></div>
        <i class="corner"></i>
      </div>
    </div>
  </section>
</main>

<footer class="statusbar">
  <output class="pane first">Multiplizieren mit Kreisteilung</output>
  <output class="pane hint">Definieren Sie den ersten Punkt (mittlere Maustaste).</output>
  <output class="coord">90.09mm</output>
  <output class="coord">48.15mm</output>
  <svg class="brand" viewBox="0 0 64 29" role="img" aria-label="Data Solid">
    <path d="M0 0h64v29H0z" fill="#dcdfe3"/><path d="M2 15C3 5 20 1 35 1c12 0 21 4 19 10-8 0-24 6-30 17C10 28 1 23 2 15z" fill="#e4003a"/><path d="M24 28c4-6 10-10 16-12l10 2-18 10z" fill="#e4003a"/>
    <text x="12" y="13" class="b-data">Data</text><text x="22" y="25" class="b-solid">Solid</text>
  </svg>
</footer>
</body>
</html>
```
FILE: styles.css
```css
* { box-sizing: border-box; }
body {
  margin: 0;
  height: 100vh;
  display: flex;
  flex-direction: column;
  background: #f0f0f0;
  color: #000;
  font: 11px/16px "Noto Sans", "Open Sans", sans-serif;
  overflow: hidden;
}
button, input, select { font: inherit; color: inherit; margin: 0; }
button { background: none; border: 0; padding: 0; }
input { border: 1px solid #7a7a7a; background: #fff; padding: 0 5px 2px; min-width: 0; border-radius: 0; }
h1, h2 { margin: 0; font-size: 11px; font-weight: 400; }
svg { display: block; }
.defs { position: absolute; width: 0; height: 0; }

select {
  appearance: none;
  height: 23px;
  border: 1px solid #adadad;
  border-radius: 0;
  padding: 0 16px 0 3px;
  background: #e1e1e1 url("data:image/svg+xml,%3Csvg xmlns='http://www.w3.org/2000/svg' width='10' height='6'%3E%3Cpath d='M1 0l4 4 4-4' fill='none' stroke='%23444'/%3E%3C/svg%3E") no-repeat right 4px center;
}
select:disabled {
  background-color: #ccc;
  background-image: url("data:image/svg+xml,%3Csvg xmlns='http://www.w3.org/2000/svg' width='10' height='6'%3E%3Cpath d='M1 0l4 4 4-4' fill='none' stroke='%23aaa'/%3E%3C/svg%3E");
  color: #777;
  opacity: 1;
}

/* title and menu */
.titlebar, .menubar { display: flex; align-items: center; background: #fff; flex: none; }
.titlebar { height: 24px; padding: 0 2px 2px; gap: 5px; }
.logo { width: 16px; height: 9px; }
.wincontrols { margin-left: auto; display: flex; }
.wincontrols button { width: 46px; height: 20px; display: grid; place-items: center; }
.wincontrols svg { width: 12px; height: 12px; stroke: #000; fill: none; }
.menubar { height: 17px; padding: 0 0 1px 7px; }
.menubar > button { padding: 0 7px; }
.mdicontrols { margin-left: auto; display: flex; }
.mdicontrols button { width: 20px; height: 16px; display: grid; place-items: center; }
.mdicontrols svg { width: 8px; height: 8px; stroke: #456; fill: none; }

/* toolbars */
.toolbar { display: flex; align-items: center; gap: 2px; flex: none; }
.main-toolbar { height: 31px; padding-left: 3px; border-bottom: 1px solid #999; }
.view-toolbar { height: 30px; padding-left: 3px; border-bottom: 1px solid #999; }
.side-toolbar { height: 27px; padding: 0 0 2px 8px; border-bottom: 1px solid #999; }
.toolbar > input { height: 24px; }
.tb { width: 22px; height: 22px; flex: none; }
.tb svg { width: 22px; height: 22px; }
.tb.wide, .tb.wide svg { width: 46px; }
.tb.color { width: 21px; background: #000; }
.sunk { border: 1px solid; border-color: #888 #fff #fff #888; }
.tb.sunk { width: 24px; height: 24px; }
.dd, .dd svg { width: 8px; height: 22px; }
.dd.grey { color: #888; }
.sep { width: 1px; height: 22px; background: #999; flex: none; }
.w-selection { width: 139px; }
.w-coord { width: 82px; }
.w-linename { width: 117px; }
.w-line { width: 76px; }
.toolbar > .w-width { width: 58px; padding: 0 3px 2px; }
.w-group { width: 110px; }
.w-plane { width: 109px; }
.w-filter { width: 90px; }
select.white { background-color: #fff; }
select.line {
  background-image: url("data:image/svg+xml,%3Csvg xmlns='http://www.w3.org/2000/svg' width='70' height='6'%3E%3Cpath d='M1 3h48' stroke='%23000' stroke-width='2'/%3E%3Cpath d='M60 0l4 4 4-4' fill='none' stroke='%23444'/%3E%3C/svg%3E");
  background-position: right 2px center;
}
.star { width: 10px; height: 22px; }
.spin { display: flex; margin-right: 5px; }
.spin input { width: 30px; height: 24px; padding: 0 3px 1px; font-weight: 700; border-right: 0; }
.spin div { display: grid; gap: 2px; }
.spin button { width: 16px; height: 11px; border: 1px solid #aaa; }
.spin svg { width: 14px; height: 9px; }
.flipped { transform: rotate(180deg); }
.ball-text { font: 700 13px "Liberation Sans", sans-serif; }

/* sidebar */
.workspace { flex: 1; display: grid; grid-template-columns: 454px 1fr; grid-template-rows: minmax(0, 1fr); min-height: 0; }
.sidebar { position: relative; display: flex; flex-direction: column; padding: 4px 5px 5px 0; min-height: 0; }
.grip { display: flex; align-items: center; height: 16px; padding-left: 6px; gap: 4px; flex: none; }
.grip span { flex: 1; height: 5px; border: 1px solid #999; border-left: 0; background: #fff; margin-right: 2px; }
.grip button, .grip svg { width: 8px; height: 10px; }
.frame { flex: 1; display: flex; flex-direction: column; margin: 1px 0 0 5px; padding: 0 4px 5px; border: 1px solid #666; background: #fcfcfc; min-height: 0; }
.tabs { display: flex; align-items: flex-end; height: 23px; flex: none; margin: 0 -4px; padding-left: 2px; background: #efefef; }
.tab { display: flex; align-items: center; gap: 5px; height: 20px; width: 64px; padding: 2px 0 0 6px; border: 1px solid #ddd; border-bottom: 0; }
.tab.active { height: 23px; background: #fff; padding: 0 0 3px 8px; border-color: #fff; gap: 6px; }
.tab svg { width: 14px; height: 14px; }
.box { border: 1px solid #666; background: #fff; overflow: hidden; min-height: 0; }
.tree { flex: 315 1 0; }
.treerow { display: flex; align-items: center; gap: 5px; height: 16px; padding-left: 22px; background: #d9d9d9; }
.treerow svg { width: 15px; height: 14px; }
.layerlist { flex: 314 1 0; margin: 6px 0; display: flex; }
.tablewrap { flex: 1; overflow: hidden; }
table { border-collapse: collapse; table-layout: fixed; width: 269px; }
.c-name { width: 99px; }
.c-s { width: 34px; }
th { height: 23px; padding: 0 0 2px 6px; font-weight: 400; text-align: left; border-left: 1px solid #e2e2e2; }
th:first-child { border-left: 0; padding-left: 5px; }
td { height: 19px; padding: 0; white-space: nowrap; }
td:first-child { padding-left: 5px; background: #f7f7f7; }
td:nth-child(4) { padding-left: 6px; }
td:nth-child(5) { padding-left: 2px; }
td svg { width: 14px; height: 14px; }
td:first-child svg { float: left; margin-right: 3px; }
.sw { display: block; width: 16px; height: 16px; background: #000; }
.magenta { background: #b400b4; }
.green { background: #0f0; }
.navy { background: #0000b4; }
.blue { background: #00f; }
.ln { display: block; width: 16px; height: 4px; background: #000; }
.ln.dashed { background: linear-gradient(90deg, #000 0 5px, #fff 5px 6px, #000 6px 10px, #fff 10px 11px, #000 11px); }
.strip { display: flex; gap: 6px; align-items: center; height: 28px; flex: none; padding-left: 3px; margin-bottom: 2px; background: #efefef; border-bottom: 1px solid #999; }
.console { flex: 182 1 0; display: flex; flex-direction: column; }
.output { flex: 1; border-left: 16px solid #f0f0f0; }

/* scrollbars */
.vscroll { width: 16px; display: flex; flex-direction: column; background: #f0f0f0; }
.hscroll { height: 16px; display: flex; background: #f0f0f0; }
.vscroll svg, .hscroll svg { width: 16px; height: 16px; flex: none; }
.flip { transform: rotate(180deg); margin-top: auto; }
.left { transform: rotate(-90deg); }
.right { transform: rotate(90deg); margin-left: auto; }
.thumb { background: #cdcdcd; }
.list-thumb { height: 56%; }
.console-thumb { width: 19%; }
.view-thumb { height: 118px; margin-top: 398px; }
.wide-thumb { width: 187px; margin-left: 585px; }

/* tool palettes */
.model { display: flex; flex-direction: column; border-left: 1px solid #888; min-width: 0; min-height: 0; }
.modelbody { flex: 1; display: flex; min-height: 0; }
.palette { width: 29px; flex: none; display: flex; flex-direction: column; align-items: center; padding-top: 3px; border-right: 1px solid #999; }
.palette + .palette { width: 30px; }
.palette button { width: 22px; height: 24px; display: grid; place-items: center; position: relative; flex: none; }
.palette svg { width: 22px; height: 22px; }
.palette hr { width: 22px; height: 1px; margin: 2px 0 1px; border: 0; background: #777; flex: none; }
.lined button { height: 28px; padding-bottom: 4px; border-bottom: 1px solid #777; }
.lined button:last-child { border-bottom: 0; }
.more::after { content: ""; position: absolute; right: 0; bottom: 4px; border: 3px solid transparent; border-left-color: #000; border-right: 0; }
.dot { stroke: #2c4a60; stroke-width: 5px; stroke-linecap: round; fill: none; }

/* drawing area */
.viewport { flex: 1; display: grid; grid-template: minmax(0, 1fr) 16px / 1fr 16px; min-width: 0; min-height: 0; }
.canvas { position: relative; background: #fff; min-height: 0; }
.drawing { position: absolute; inset: 0; width: 100%; height: 100%; }
.drawing text { font: 12px "Liberation Sans", sans-serif; }
.axis { fill: none; stroke: #1c1c9c; stroke-dasharray: 8 3 2 3; }
.notes { position: absolute; left: -40px; top: 217px; width: 540px; height: 420px; pointer-events: none; }
.arrow { fill: #fc4040; filter: drop-shadow(2px 3px 2px rgba(0, 0, 0, .4)); }

/* floating windows */
.window { position: absolute; background: #f0f0f0; box-shadow: 0 2px 8px rgba(0, 0, 0, .4); }
.window h2 { color: #999; background: #fff; height: 31px; line-height: 29px; padding-left: 8px; }
.circle-window { left: 96px; top: 274px; width: 112px; height: 62px; border: 1px solid #aaa; }
.circle-window h2 { height: 30px; }
.circlebtns { display: flex; }
.circlebtns button { width: 24px; height: 24px; display: grid; place-items: center; }
.circlebtns svg { width: 22px; height: 22px; }
.arrange-window { left: 35px; top: 93px; width: 183px; height: 148px; border: 1px solid #aaa; }
.arrange-window h2 { height: 30px; }
.arrange-body { display: grid; grid-template-columns: 20px 1fr; gap: 3px 0; padding: 4px 10px; }
.arrange-body select { height: 23px; }
.arrange-body .second { grid-column: 2; }
.checks { display: grid; gap: 4px; padding: 13px 9px; }
.checks label { display: flex; align-items: center; gap: 3px; height: 16px; }
.checks input { appearance: none; width: 13px; height: 13px; border: 1px solid #222; padding: 0; }
.checks input:checked { background: #fff url("data:image/svg+xml,%3Csvg xmlns='http://www.w3.org/2000/svg' width='11' height='11'%3E%3Cpath d='M1 5l3 3 6-6' fill='none' stroke='%23222'/%3E%3C/svg%3E"); }
.status-window { left: 882px; top: 229px; width: 241px; height: 273px; display: flex; flex-direction: column; }
.status-window header { display: flex; align-items: center; background: #fff; height: 31px; }
.status-window header button { margin: 4px 0 0 auto; width: 19px; height: 19px; background: #e2e2e2; color: #f4f4f4; }
.status-body { flex: 1; display: grid; grid-template-columns: 86px 1fr; }
.names { display: grid; align-content: start; grid-auto-rows: 20px; border-right: 2px solid #777; padding: 0 0 0 12px; line-height: 20px; }
.values { display: grid; align-content: start; gap: 1px; padding-left: 9px; }
.values > div { display: grid; }
.values input { height: 20px; width: 100%; }

/* status bar */
.statusbar { display: flex; align-items: flex-start; height: 32px; flex: none; border-top: 1px solid #999; background: #f0f0f0; }
.pane { height: 20px; margin-top: 6px; padding: 0 1px; border: 1px solid; border-color: #999 #fff #fff #999; }
.pane.first { width: 198px; margin-right: 2px; border-left: 0; padding-left: 2px; }
.hint { flex: 1; }
.coord { width: 104px; padding: 5px 0 0 6px; }
.brand { width: 64px; height: 29px; margin: 2px 0 0 100px; }
.b-data { font: 700 11px/12px "DejaVu Sans", sans-serif; fill: #fff; }
.b-solid { font: italic 700 11px/12px "DejaVu Sans", sans-serif; }
```
